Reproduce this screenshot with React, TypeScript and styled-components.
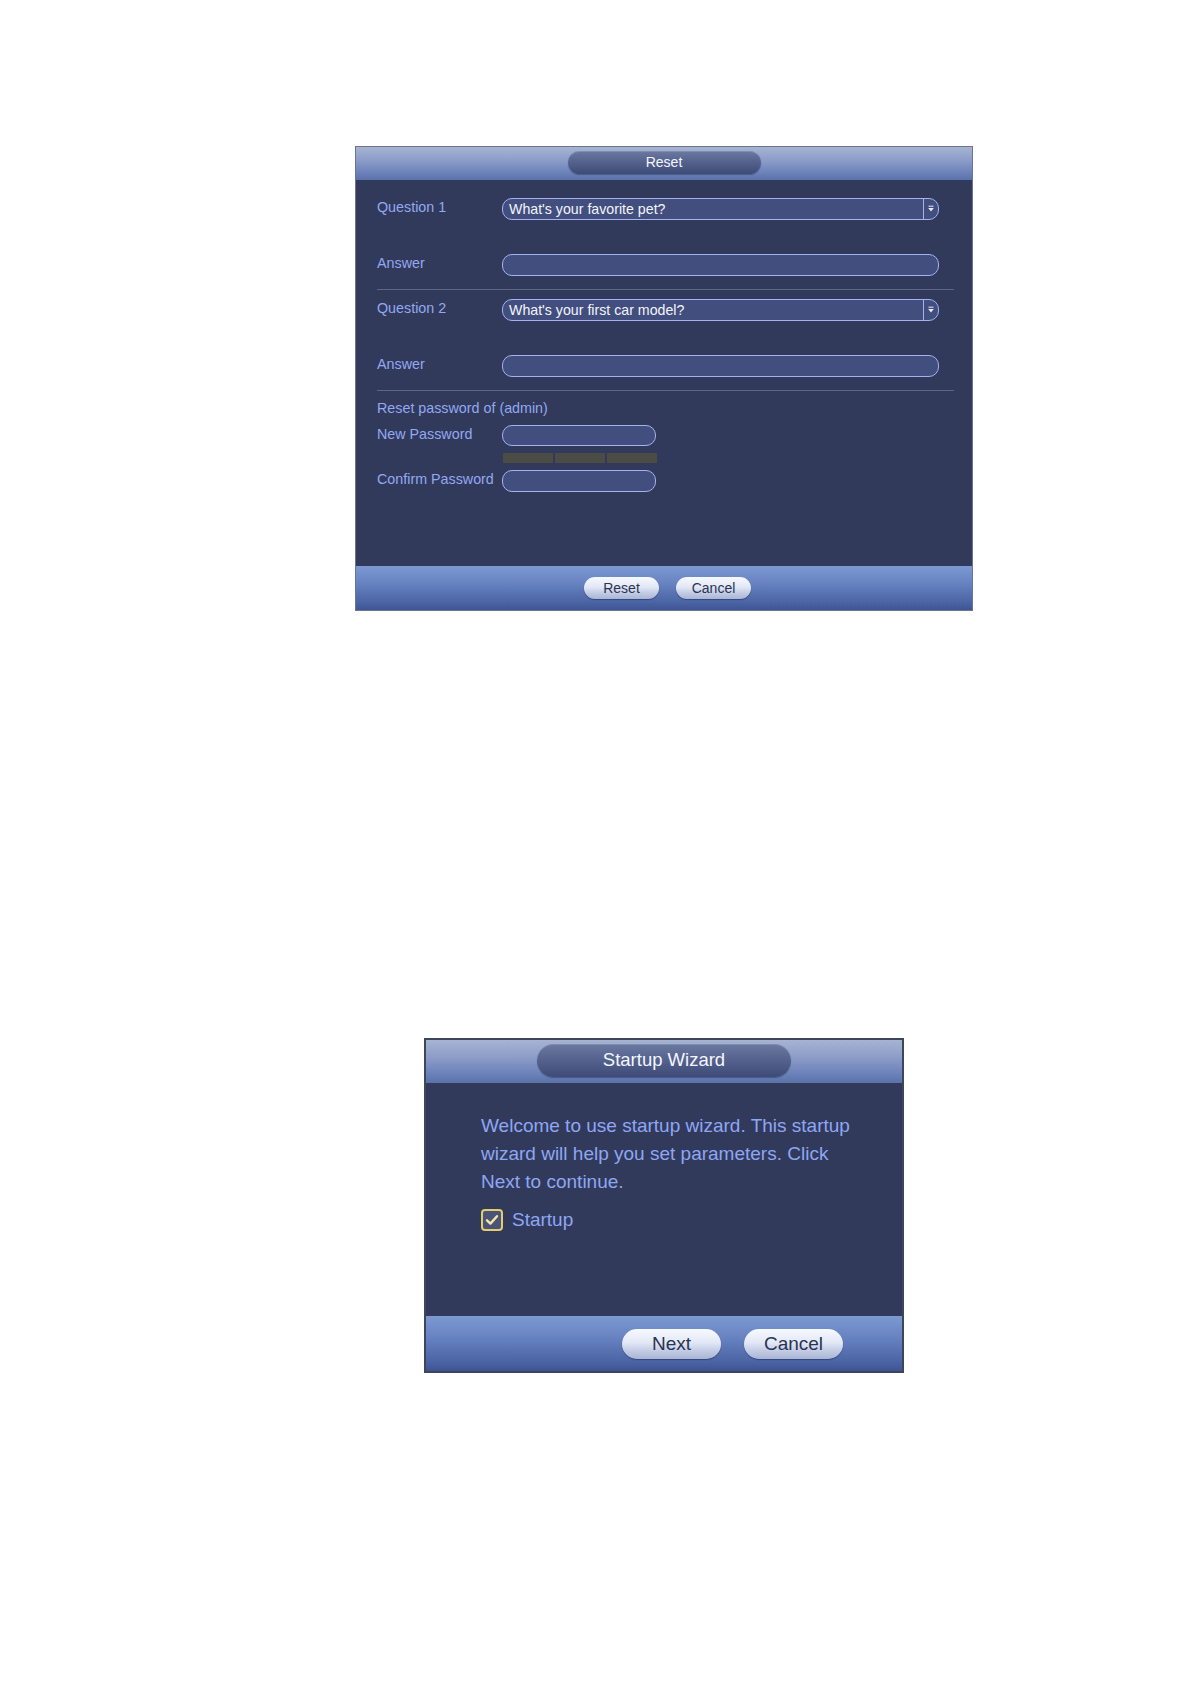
import React from 'react'
import styled, { createGlobalStyle } from 'styled-components'

const GlobalStyle = createGlobalStyle`
  html, body {
    margin: 0;
    padding: 0;
    background: #ffffff;
  }
  body {
    font-family: "Liberation Sans", Arial, sans-serif;
  }
`

const Page = styled.div`
  width: 1191px;
  min-height: 1684px;
  display: flex;
  flex-direction: column;
  align-items: flex-start;
  padding-top: 146px;
  box-sizing: border-box;
`

const Dialog = styled.div<{ $left: number; $width: number; $top?: number; $border: string }>`
  margin-left: ${p => p.$left}px;
  margin-top: ${p => p.$top || 0}px;
  width: ${p => p.$width}px;
  background: #313a5b;
  border: ${p => p.$border};
  box-sizing: border-box;
  display: flex;
  flex-direction: column;
`

const Header = styled.div<{ $height: number }>`
  height: ${p => p.$height}px;
  background: linear-gradient(#a6b3d2 0%, #8c9dc8 40%, #6e84bb 75%, #5a71ab 100%);
  display: flex;
  align-items: center;
  justify-content: center;
`

const TitlePill = styled.div<{ $width: number; $height: number; $size: number }>`
  width: ${p => p.$width}px;
  height: ${p => p.$height}px;
  border-radius: ${p => p.$height / 2}px;
  background: linear-gradient(#6b7aa2 0%, #55638e 45%, #3f4b77 100%);
  box-shadow: inset 0 1px 0 rgba(255, 255, 255, 0.15), 0 1px 1px rgba(30, 40, 70, 0.4);
  color: #f4f6ff;
  font-size: ${p => p.$size}px;
  display: flex;
  align-items: center;
  justify-content: center;
  margin-top: -3px;
`

const Body = styled.div<{ $height: number; $pad: string }>`
  height: ${p => p.$height}px;
  padding: ${p => p.$pad};
  box-sizing: border-box;
  display: flex;
  flex-direction: column;
`

const Row = styled.div<{ $mt: number; $h: number }>`
  display: flex;
  align-items: center;
  margin-top: ${p => p.$mt}px;
  height: ${p => p.$h}px;
`

const Label = styled.div`
  width: 125px;
  flex-shrink: 0;
  color: #93a8f2;
  font-size: 14.3px;
  margin-top: -4px;
  white-space: nowrap;
`

const Field = styled.div<{ $width: number }>`
  width: ${p => p.$width}px;
  height: 100%;
  box-sizing: border-box;
  border: 1.5px solid #a4b2ef;
  border-radius: 10px;
  background: #424e7e;
  display: flex;
  align-items: center;
  overflow: hidden;
`

const FieldText = styled.div`
  flex: 1;
  padding-left: 6px;
  color: #f2f4fc;
  font-size: 14.2px;
  white-space: nowrap;
`

const DropButton = styled.div`
  width: 13px;
  height: 100%;
  border-left: 1.5px solid #a4b2ef;
  display: flex;
  align-items: center;
  justify-content: center;
  margin-right: 1px;
`

const Divider = styled.div<{ $mt: number }>`
  margin-top: ${p => p.$mt}px;
  height: 1px;
  background: #5d6684;
`

const Section = styled.div<{ $mt: number }>`
  margin-top: ${p => p.$mt}px;
  height: 18px;
  line-height: 18px;
  color: #93a8f2;
  font-size: 14.3px;
`

const Strength = styled.div<{ $mt: number }>`
  margin-top: ${p => p.$mt}px;
  margin-left: 126px;
  display: flex;
  gap: 2px;
  height: 10px;
`

const StrengthBar = styled.div`
  width: 50px;
  height: 100%;
  background: #4c4c47;
`

const Footer = styled.div<{ $height: number; $justify: string; $pad: string; $gap: number }>`
  height: ${p => p.$height}px;
  background: linear-gradient(#7d99d2 0%, #6782c0 40%, #4d66a6 80%, #3e5594 100%);
  display: flex;
  align-items: center;
  justify-content: ${p => p.$justify};
  padding: ${p => p.$pad};
  gap: ${p => p.$gap}px;
  box-sizing: border-box;
`

const PillButton = styled.button<{ $width: number; $height: number; $size: number }>`
  width: ${p => p.$width}px;
  height: ${p => p.$height}px;
  border-radius: ${p => p.$height / 2}px;
  border: none;
  padding: 0;
  background: linear-gradient(#f7f9ff 0%, #e3e8f6 45%, #c5cee6 70%, #a9b5d5 100%);
  box-shadow: 0 1px 1px rgba(20, 30, 70, 0.45);
  color: #2a3352;
  font-family: "Liberation Sans", Arial, sans-serif;
  font-size: ${p => p.$size}px;
  cursor: pointer;
`

const WizardText = styled.div`
  color: #8ea6f4;
  font-size: 19px;
  line-height: 28px;
  width: 380px;
`

const CheckRow = styled.div`
  display: flex;
  align-items: center;
  gap: 9px;
  margin-top: 13px;
  color: #8ea6f4;
  font-size: 19px;
`

const CheckBox = styled.div`
  width: 22px;
  height: 22px;
  box-sizing: border-box;
  border: 2px solid #e2cc6c;
  border-radius: 4px;
  background: #4a5378;
  display: flex;
  align-items: center;
  justify-content: center;
`

const SelectField = ({ value }: { value: string }) => (
  <Field $width={437}>
    <FieldText>{value}</FieldText>
    <DropButton>
      <svg width="8" height="8" viewBox="0 0 8 8">
        <path d="M1.5 1.2 H6.5" stroke="#e8ecfa" strokeWidth="1" />
        <path d="M1.2 3 L6.8 3 L4 6.5 Z" fill="#e8ecfa" />
      </svg>
    </DropButton>
  </Field>
)

export default function App() {
  return (
    <Page>
      <GlobalStyle />
      <Dialog $left={355} $width={618} $border="1px solid #6d7391">
        <Header $height={33}>
          <TitlePill $width={193} $height={23} $size={14}>Reset</TitlePill>
        </Header>
        <Body $height={386} $pad="0 18px 0 21px">
          <Row $mt={18} $h={22}>
            <Label>Question 1</Label>
            <SelectField value="What's your favorite pet?" />
          </Row>
          <Row $mt={34} $h={22}>
            <Label>Answer</Label>
            <Field $width={437} />
          </Row>
          <Divider $mt={13} />
          <Row $mt={9} $h={22}>
            <Label>Question 2</Label>
            <SelectField value="What's your first car model?" />
          </Row>
          <Row $mt={34} $h={22}>
            <Label>Answer</Label>
            <Field $width={437} />
          </Row>
          <Divider $mt={13} />
          <Section $mt={8}>Reset password of (admin)</Section>
          <Row $mt={8} $h={21}>
            <Label>New Password</Label>
            <Field $width={154} />
          </Row>
          <Strength $mt={7}>
            <StrengthBar />
            <StrengthBar />
            <StrengthBar />
          </Strength>
          <Row $mt={7} $h={22}>
            <Label>Confirm Password</Label>
            <Field $width={154} />
          </Row>
        </Body>
        <Footer $height={44} $justify="center" $pad="0 0 0 7px" $gap={17}>
          <PillButton $width={75} $height={22} $size={14}>Reset</PillButton>
          <PillButton $width={75} $height={22} $size={14}>Cancel</PillButton>
        </Footer>
      </Dialog>

      <Dialog $left={424} $top={427} $width={480} $border="2px solid #3f465c">
        <Header $height={43}>
          <TitlePill $width={254} $height={33} $size={18.5}>Startup Wizard</TitlePill>
        </Header>
        <Body $height={233} $pad="29px 0 0 55px">
          <WizardText>
            Welcome to use startup wizard. This startup wizard will help you set parameters. Click Next to continue.
          </WizardText>
          <CheckRow>
            <CheckBox>
              <svg width="16" height="16" viewBox="0 0 16 16">
                <path d="M3 8.3 L6.4 11.6 L13 4.2" fill="none" stroke="#f3e6a8" strokeWidth="2.4" strokeLinecap="round" strokeLinejoin="round" />
              </svg>
            </CheckBox>
            Startup
          </CheckRow>
        </Body>
        <Footer $height={55} $justify="flex-end" $pad="0 59px 0 0" $gap={23}>
          <PillButton $width={99} $height={30} $size={19}>Next</PillButton>
          <PillButton $width={99} $height={30} $size={19}>Cancel</PillButton>
        </Footer>
      </Dialog>
    </Page>
  )
}
